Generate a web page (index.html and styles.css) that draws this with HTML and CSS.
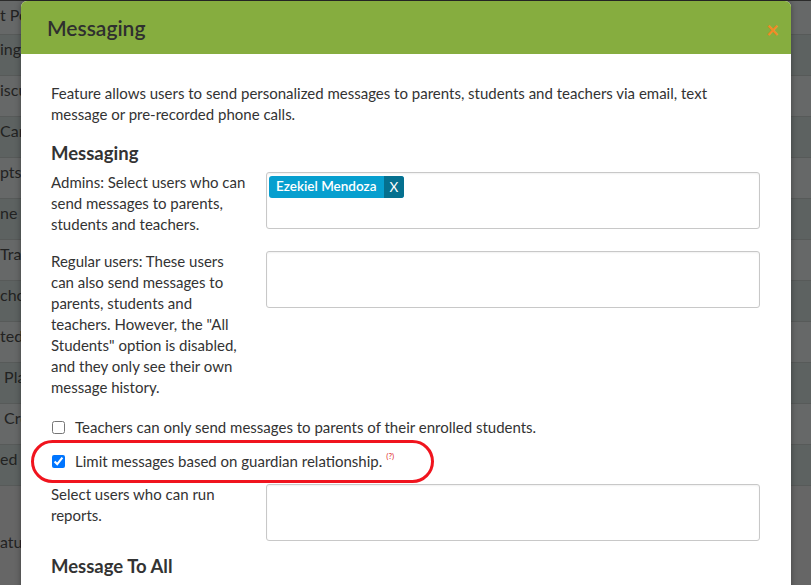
FILE: index.html
```html
<!DOCTYPE html>
<html lang="en">
<head>
    <meta charset="UTF-8">
    <meta name="viewport" content="width=device-width, initial-scale=1.0">
    <title>Messaging</title>
    <link rel="stylesheet" href="styles.css">
</head>
<body>
    <!-- page behind the dialog, dimmed -->
    <div class="backdrop">
        <div class="bg-row">t Po</div>
        <div class="bg-row">ing</div>
        <div class="bg-row">iscu</div>
        <div class="bg-row">Car</div>
        <div class="bg-row">pts</div>
        <div class="bg-row">ne <span class="bg-help">(</span></div>
        <div class="bg-row">Trac</div>
        <div class="bg-row">choo</div>
        <div class="bg-row">ted</div>
        <div class="bg-row">&nbsp;Pla</div>
        <div class="bg-row">&nbsp;Cre</div>
        <div class="bg-row">ed l</div>
        <div class="bg-row bg-tall">atu</div>
    </div>

    <div class="modal">
        <div class="modal-header">
            <h2>Messaging</h2>
            <span class="close">&times;</span>
        </div>
        <div class="modal-body">
            <p class="intro">Feature allows users to send personalized messages to parents, students and teachers via email, text message or pre-recorded phone calls.</p>

            <h3>Messaging</h3>
            <div class="field">
                <label class="field-label">Admins: Select users who can send messages to parents, students and teachers.</label>
                <div class="picker">
                    <span class="tag">Ezekiel Mendoza<span class="tag-x">X</span></span>
                </div>
            </div>
            <div class="field">
                <label class="field-label">Regular users: These users can also send messages to parents, students and teachers. However, the "All Students" option is disabled, and they only see their own message history.</label>
                <div class="picker"></div>
            </div>

            <div class="checks">
                <div class="check">
                    <input type="checkbox" id="c1">
                    <label for="c1">Teachers can only send messages to parents of their enrolled students.</label>
                </div>
                <div class="check highlight">
                    <input type="checkbox" id="c2" checked>
                    <label for="c2">Limit messages based on guardian relationship.</label>
                    <sup class="help">(?)</sup>
                </div>
            </div>

            <div class="field last">
                <label class="field-label">Select users who can run reports.</label>
                <div class="picker"></div>
            </div>

            <h3>Message To All</h3>
        </div>
    </div>
</body>
</html>
```

FILE: styles.css
```css
body {
    font-family: Lato, "Open Sans", sans-serif;
    margin: 0;
    padding: 0;
    height: 585px;
    overflow: hidden;
    background-color: #2b2b2b;
    color: #333;
}
.backdrop {
    margin-top: 1px;
}
.bg-row {
    height: 40px;
    line-height: 28px;
    border-bottom: 1px solid #575a59;
    background-color: #666868;
    color: #222;
    font-size: 16px;
    white-space: nowrap;
}
.bg-row:first-child {
    height: 33px;
}
.bg-row:nth-child(even) {
    background-color: #5d6261;
}
.bg-row.bg-tall {
    height: 120px;
    line-height: 112px;
    background-color: #666666;
}
.bg-help {
    color: #7a3a3a;
    font-size: 12px;
}

.modal {
    position: absolute;
    top: 1px;
    left: 21px;
    width: 770px;
    height: 640px;
    background-color: #fff;
    border-radius: 6px 6px 0 0;
    box-shadow: 0 0 6px rgba(0, 0, 0, 0.35);
}
.modal-header {
    display: flex;
    align-items: center;
    justify-content: space-between;
    height: 53px;
    padding: 0 12px 0 26px;
    background-color: #86ad3f;
    border-radius: 6px 6px 0 0;
}
.modal-header h2 {
    margin: 0;
    font-size: 21px;
    font-weight: 600;
    color: #2f2f2f;
}
.close {
    color: #f28a26;
    font-size: 22px;
    font-weight: bold;
    margin-top: 3px;
}
.modal-body {
    padding: 29px 30px 0 30px;
    font-size: 15px;
    line-height: 21px;
}
.intro {
    margin: 0 0 16px 0;
}
h3 {
    margin: 0 0 7px 0;
    font-size: 18.5px;
    font-weight: bold;
    line-height: 24px;
}
.field {
    display: flex;
    gap: 20px;
    margin-bottom: 16px;
}
.field.last {
    margin-bottom: 13px;
}
.field-label {
    width: 195px;
    flex-shrink: 0;
}
.picker {
    flex: 1;
    height: 51px;
    margin-right: 1px;
    padding: 2px;
    border: 1px solid #c8c8c8;
    border-radius: 3px;
    box-shadow: inset 0 1px 2px rgba(0, 0, 0, 0.06);
}
.tag {
    display: inline-flex;
    align-items: center;
    height: 22px;
    padding-left: 7px;
    background-color: #079fcf;
    color: #fff;
    font-size: 13.5px;
    font-weight: 600;
    border-radius: 3px;
    overflow: hidden;
}
.tag-x {
    display: inline-block;
    margin-left: 7px;
    padding: 0 6px;
    line-height: 22px;
    font-weight: normal;
    background-color: #05708f;
}
.checks {
    margin-top: -4px;
    margin-bottom: 6px;
}
.check {
    display: flex;
    align-items: center;
    height: 34px;
}
.check input {
    margin: 0 10px 0 1px;
    width: 13px;
    height: 13px;
}
.highlight {
    position: relative;
}
.highlight::after {
    content: "";
    position: absolute;
    left: -20px;
    top: -4px;
    width: 397px;
    height: 37px;
    border: 3px solid #f0141e;
    border-radius: 22px;
}
.help {
    color: #e02a2a;
    font-size: 8px;
    margin-left: 4px;
    align-self: flex-start;
    margin-top: 2px;
}
```
